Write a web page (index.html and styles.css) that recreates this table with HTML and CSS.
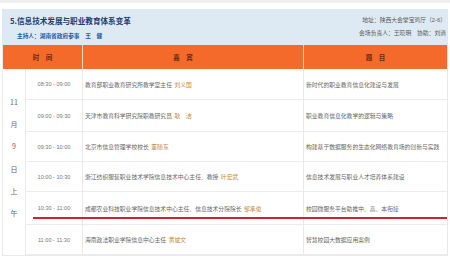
FILE: index.html
```html
<!DOCTYPE html>
<html lang="zh-CN">
<head>
<meta charset="utf-8">
<title>信息技术发展与职业教育体系变革</title>
<link rel="stylesheet" href="styles.css">
</head>
<body>
<div class="page">
  <div class="topband"></div>
  <section class="session">
    <header class="info">
      <div class="info-left">
        <h2 class="title">5.信息技术发展与职业教育体系变革</h2>
        <p class="host">主持人：湖南省政府参事　王　健</p>
      </div>
      <div class="info-right">
        <p>地址：陕西大会堂宝鸡厅（2-6）</p>
        <p>会场负责人：王晓明　协助：刘清</p>
      </div>
    </header>
    <div class="schedule">
      <div class="th th-time">时　间</div>
      <div class="th th-guest">嘉　宾</div>
      <div class="th th-topic">题　目</div>

      <div class="date">
        <span>11</span><span>月</span><span>9</span><span>日</span><span>上</span><span>午</span>
      </div>

      <div class="cell time">08:30 - 09:00</div>
      <div class="cell guest">教育部职业教育研究所教学室主任<span class="name">刘义国</span></div>
      <div class="cell topic">新时代的职业教育信息化建设与发展</div>

      <div class="cell time">09:00 - 09:30</div>
      <div class="cell guest">天津市教育科学研究院职教研究员<span class="name">耿　洁</span></div>
      <div class="cell topic">职业教育信息化教学的逻辑与策略</div>

      <div class="cell time">09:30 - 10:00</div>
      <div class="cell guest">北京市信息管理学校校长<span class="name">董随东</span></div>
      <div class="cell topic">构建基于数据服务的生态化网络教育场的创新与实践</div>

      <div class="cell time">10:00 - 10:30</div>
      <div class="cell guest">浙江纺织服装职业技术学院信息技术中心主任、教授<span class="name">叶宏武</span></div>
      <div class="cell topic">信息技术发展与职业人才培养体系建设</div>

      <div class="cell time">10:30 - 11:00</div>
      <div class="cell guest">成都农业科技职业学院信息技术中心主任、信息技术分院院长<span class="name">邹承俊</span></div>
      <div class="cell topic">校园微服务平台助推中、高、本衔接</div>

      <div class="cell time">11:00 - 11:30</div>
      <div class="cell guest">海南政法职业学院信息中心主任<span class="name">黄斌文</span></div>
      <div class="cell topic">智慧校园大数据应用案例</div>

      <div class="mark"></div>
    </div>
  </section>
</div>
</body>
</html>
```

FILE: styles.css
```css
* {
  box-sizing: border-box;
}

html, body {
  margin: 0;
  padding: 0;
  background: #ffffff;
}

body {
  font-family: "Liberation Sans", "Noto Sans CJK SC", sans-serif;
  color: #666666;
}

.page {
  width: 450px;
  height: 260px;
  overflow: hidden;
}

.topband {
  height: 3px;
  background: #eceef0;
  margin-bottom: 6px;
}

.session {
  margin: 0 2px;
}

.info {
  height: 36px;
  background: #dde9f3;
  display: flex;
  justify-content: space-between;
}

.info-left {
  padding: 7px 0 0 8px;
}

.title {
  margin: 0;
  font-family: "Noto Sans CJK SC", sans-serif;
  font-size: 7.6px;
  line-height: 10px;
  font-weight: 700;
  color: #1d3c73;
}

.host {
  margin: 5px 0 0 7px;
  font-family: "Noto Sans CJK SC", sans-serif;
  font-size: 5.7px;
  line-height: 10px;
  font-weight: 700;
  color: #1f5aa8;
}

.info-right {
  padding: 5px 2px 0 0;
  text-align: right;
}

.info-right p {
  margin: 0;
  font-size: 5.8px;
  line-height: 12.5px;
  color: #5a5a5a;
}

.schedule {
  position: relative;
  display: grid;
  grid-template-columns: 22px 57px 221px 1fr;
  grid-template-rows: 24px 31px 32px 30px 30px 33px 30px;
  border-left: 1px solid #e9e9e9;
  border-right: 1px solid #e9e9e9;
  border-bottom: 1px solid #e9e9e9;
}

.th {
  background: #f46a2b;
  color: #6a2a10;
  font-family: "Noto Sans CJK SC", sans-serif;
  font-size: 6.5px;
  font-weight: 700;
  display: flex;
  align-items: center;
  justify-content: center;
}

.th-time {
  grid-column: 1 / 3;
}

.th-guest {
  border-left: 1px solid #fbd3bf;
  padding-right: 20px;
}

.th-topic {
  border-left: 1px solid #fbd3bf;
}

.date {
  grid-column: 1;
  grid-row: 2 / 8;
  display: flex;
  flex-direction: column;
  align-items: center;
  justify-content: center;
  padding-bottom: 9px;
  font-family: "Noto Sans CJK SC", sans-serif;
  font-size: 7px;
  color: #666666;
}

.date span {
  line-height: 22.2px;
}

.cell {
  display: flex;
  align-items: center;
  border-left: 1px solid #e9e9e9;
  border-bottom: 1px solid #ececec;
  font-size: 5.8px;
  white-space: nowrap;
}

.time {
  justify-content: center;
  color: #777777;
  font-size: 5.6px;
}

.guest,
.topic {
  padding-left: 2px;
}

.name {
  margin-left: 2.5px;
  color: #c98a3c;
}

.mark {
  position: absolute;
  top: 172px;
  left: 30px;
  right: 0;
  height: 2px;
  background: #d3222a;
}
```
